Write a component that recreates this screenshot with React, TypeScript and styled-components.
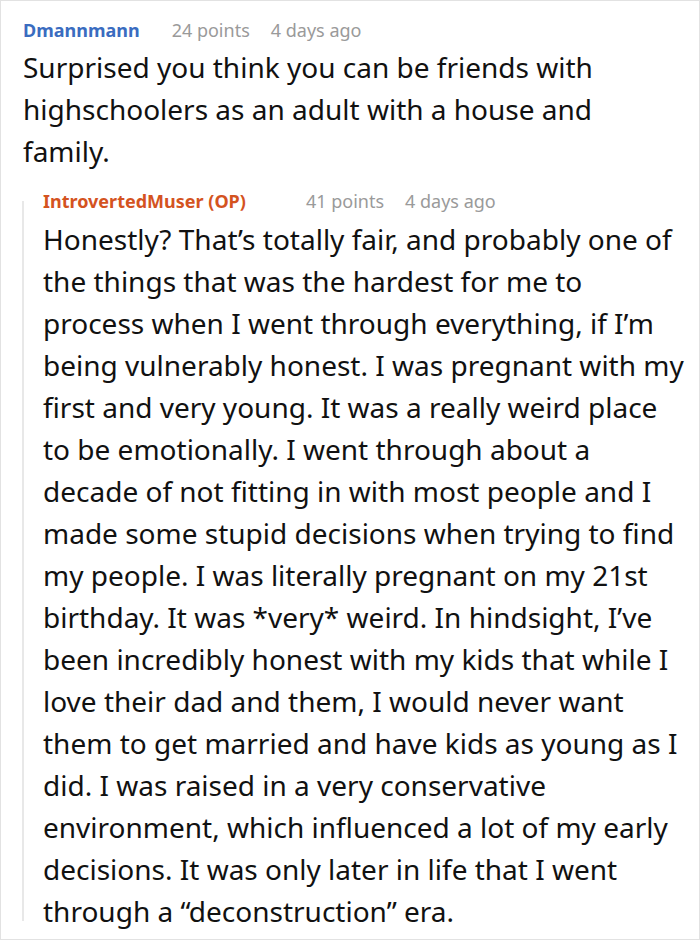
import React from "react";
import styled, { createGlobalStyle } from "styled-components";

const Global = createGlobalStyle`
  html, body { margin: 0; padding: 0; background: #fff; }
  body { font-family: "Noto Sans", "Open Sans", sans-serif; }
`;

const Frame = styled.div`
  box-sizing: border-box;
  width: 700px;
  height: 940px;
  border: 1px solid #e2e2e2;
  padding: 16px 13px 0 22px;
  overflow: hidden;
  background: #fff;
`;

const Comment = styled.div`
  display: flex;
  flex-direction: column;
`;

const Reply = styled(Comment)`
  position: relative;
  margin-top: 16px;
  padding-left: 20px;
  &::before {
    content: "";
    position: absolute;
    left: -1px;
    top: 13px;
    bottom: 11px;
    width: 2px;
    background: #e8e8e8;
  }
`;

const Meta = styled.div<{ $after?: number }>`
  display: flex;
  align-items: baseline;
  font-size: 18px;
  line-height: 27px;
  color: #9a9a9a;
  margin-bottom: ${(p) => p.$after ?? 0}px;
`;

const Author = styled.span<{ $color: string; $gap: number }>`
  font-weight: 700;
  color: ${(p) => p.$color};
  margin-right: ${(p) => p.$gap}px;
`;

const MetaRight = styled.div`
  display: flex;
  gap: 21px;
`;

const Body = styled.p<{ $maxWidth?: number }>`
  margin: 0;
  font-size: 28px;
  line-height: 42px;
  color: #111;
  max-width: ${(p) => (p.$maxWidth ? `${p.$maxWidth}px` : "none")};
`;

export default function App() {
  return (
    <>
      <Global />
      <Frame>
        <Comment>
          <Meta $after={2}>
            <Author $color="#3a6cc0" $gap={32}>
              Dmannmann
            </Author>
            <MetaRight>
              <span>24 points</span>
              <span>4 days ago</span>
            </MetaRight>
          </Meta>
          <Body $maxWidth={620}>
            Surprised you think you can be friends with highschoolers as an
            adult with a house and family.
          </Body>
        </Comment>
        <Reply>
          <Meta $after={3}>
            <Author $color="#d4531f" $gap={60}>
              IntrovertedMuser (OP)
            </Author>
            <MetaRight>
              <span>41 points</span>
              <span>4 days ago</span>
            </MetaRight>
          </Meta>
          <Body>
            Honestly? That’s totally fair, and probably one of the things that
            was the hardest for me to process when I went through everything, if
            I’m being vulnerably honest. I was pregnant with my first and very
            young. It was a really weird place to be emotionally. I went through
            about a decade of not fitting in with most people and I made some
            stupid decisions when trying to find my people. I was literally
            pregnant on my 21st birthday. It was *very* weird. In hindsight,
            I’ve been incredibly honest with my kids that while I love their dad
            and them, I would never want them to get married and have kids as
            young as I did. I was raised in a very conservative environment,
            which influenced a lot of my early decisions. It was only later in
            life that I went through a “deconstruction” era.
          </Body>
        </Reply>
      </Frame>
    </>
  );
}
